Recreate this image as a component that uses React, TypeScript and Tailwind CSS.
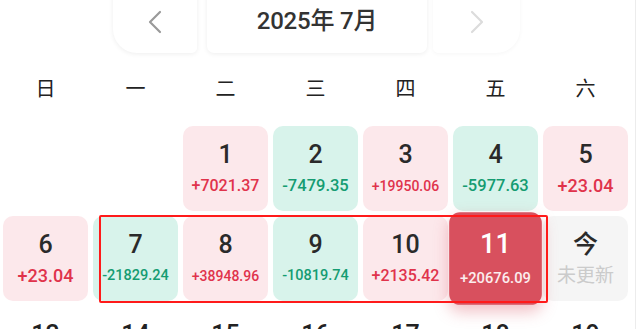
import React from 'react';

type Kind = 'up' | 'down' | 'hot' | 'today' | 'future' | 'empty';

interface Day {
  d: string;
  v?: string;
  kind: Kind;
  size?: string;
}

const weekdays = ['日', '一', '二', '三', '四', '五', '六'];

const rows: Day[][] = [
  [
    { d: '', kind: 'empty' },
    { d: '', kind: 'empty' },
    { d: '1', v: '+7021.37', kind: 'up', size: 'text-[16px]' },
    { d: '2', v: '-7479.35', kind: 'down', size: 'text-[16.5px]' },
    { d: '3', v: '+19950.06', kind: 'up', size: 'text-[14px]' },
    { d: '4', v: '-5977.63', kind: 'down', size: 'text-[16.5px]' },
    { d: '5', v: '+23.04', kind: 'up', size: 'text-[18px]' },
  ],
  [
    { d: '6', v: '+23.04', kind: 'up', size: 'text-[18px]' },
    { d: '7', v: '-21829.24', kind: 'down', size: 'text-[14.5px]' },
    { d: '8', v: '+38948.96', kind: 'up', size: 'text-[14px]' },
    { d: '9', v: '-10819.74', kind: 'down', size: 'text-[14.5px]' },
    { d: '10', v: '+2135.42', kind: 'up', size: 'text-[16px]' },
    { d: '11', v: '+20676.09', kind: 'hot', size: 'text-[13.5px]' },
    { d: '今', v: '未更新', kind: 'today' },
  ],
  [
    { d: '13', kind: 'future' },
    { d: '14', kind: 'future' },
    { d: '15', kind: 'future' },
    { d: '16', kind: 'future' },
    { d: '17', kind: 'future' },
    { d: '18', kind: 'future' },
    { d: '19', kind: 'future' },
  ],
];

const font = { fontFamily: 'Roboto, "Noto Sans CJK SC", sans-serif' };

const Chevron: React.FC<{ dir: 'left' | 'right'; color: string }> = ({ dir, color }) => (
  <svg width="14" height="24" viewBox="0 0 14 24" fill="none">
    <polyline
      points={dir === 'left' ? '12,2 2,12 12,22' : '2,2 12,12 2,22'}
      stroke={color}
      strokeWidth="2.2"
      strokeLinecap="round"
      strokeLinejoin="round"
    />
  </svg>
);

const Cell: React.FC<{ day: Day }> = ({ day }) => {
  if (day.kind === 'empty') return <div className="h-[85px]" />;

  if (day.kind === 'future') {
    return (
      <div className="h-[85px] flex flex-col items-center pt-[14px]">
        <span className="text-[25px] leading-[30px] font-medium text-[#222]">{day.d}</span>
      </div>
    );
  }

  const box =
    day.kind === 'up'
      ? 'bg-[#fce8eb]'
      : day.kind === 'down'
      ? 'bg-[#d8f3eb]'
      : day.kind === 'hot'
      ? 'bg-[#d8505e] scale-[1.09] relative z-10 shadow-[0_6px_14px_rgba(216,80,94,0.35)]'
      : 'bg-[#f5f5f5]';

  const numColor = day.kind === 'hot' ? 'text-white' : 'text-[#2a2a2a]';
  const valColor =
    day.kind === 'up'
      ? 'text-[#e0334b] font-medium'
      : day.kind === 'down'
      ? 'text-[#159c72] font-medium'
      : day.kind === 'hot'
      ? 'text-white/90 font-medium'
      : 'text-[#cbcbcb]';

  return (
    <div className={`h-[85px] rounded-[10px] flex flex-col items-center pt-[14px] ${box}`}>
      <span className={`text-[25px] leading-[30px] font-medium ${numColor}`}>{day.d}</span>
      <span className={`mt-[6px] leading-[20px] ${day.size ?? 'text-[19px]'} ${valColor}`}>{day.v}</span>
    </div>
  );
};

export default function App() {
  return (
    <div className="relative w-[640px] h-[329px] overflow-hidden bg-white flex" style={font}>
      <div className="w-[635px] flex flex-col">
        {/* month switcher */}
        <div className="shrink-0 flex items-stretch h-[64px] -mt-[11px] pl-[113px]">
          <div className="w-[84px] bg-white rounded-bl-[24px] rounded-br-[5px] shadow-[0_1px_5px_rgba(0,0,0,0.07)] flex items-center justify-center pt-[2px]">
            <Chevron dir="left" color="#9a9a9a" />
          </div>
          <div className="ml-[10px] w-[220px] bg-white rounded-b-[7px] shadow-[0_1px_5px_rgba(0,0,0,0.07)] flex items-center justify-center">
            <span className="text-[24px] font-medium text-[#333] tracking-[-0.2px]">2025年 7月</span>
          </div>
          <div className="ml-[6px] w-[87px] bg-white rounded-br-[24px] rounded-bl-[5px] shadow-[0_1px_4px_rgba(0,0,0,0.04)] flex items-center justify-center pt-[2px]">
            <Chevron dir="right" color="#dcdcdc" />
          </div>
        </div>

        {/* weekdays */}
        <div className="shrink-0 mt-[20px] h-[30px] grid grid-cols-[repeat(7,85px)] gap-x-[5px] pl-[3px]">
          {weekdays.map((w) => (
            <div key={w} className="flex items-center justify-center text-[20px] text-[#222]" style={{ fontFamily: '"Noto Sans CJK SC", sans-serif' }}>
              {w}
            </div>
          ))}
        </div>

        {/* days */}
        <div className="shrink-0 mt-[23px] grid grid-cols-[repeat(7,85px)] gap-[5px] pl-[3px]">
          {rows.flat().map((day, i) => (
            <Cell key={i} day={day} />
          ))}
        </div>
      </div>
      <div className="w-px h-full bg-[#ececec]" />

      {/* highlight annotation */}
      <div className="absolute left-[99px] top-[215px] w-[449px] h-[88px] border-2 border-[#ff1a1a] rounded-[2px] z-20 pointer-events-none" />
    </div>
  );
}
